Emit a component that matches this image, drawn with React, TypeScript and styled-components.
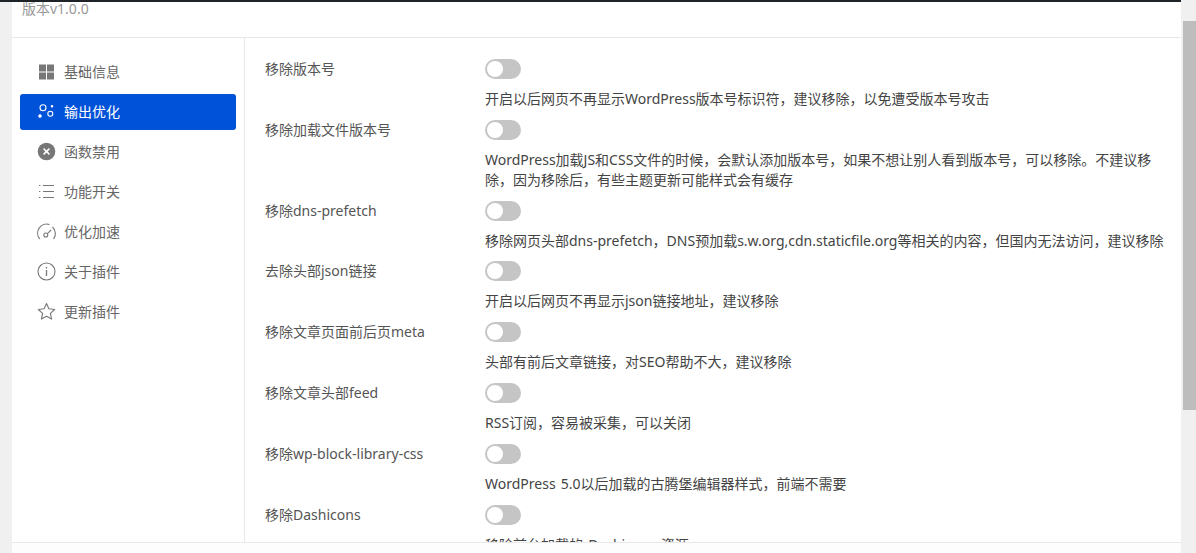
import styled, { createGlobalStyle } from "styled-components";

const GlobalStyle = createGlobalStyle`
  html, body {
    margin: 0;
    padding: 0;
    height: 100%;
    overflow: hidden;
    background: #f0f0f0;
  }
  * {
    box-sizing: border-box;
  }
  #root {
    height: 100%;
  }
`;

const Page = styled.div`
  display: flex;
  width: 1196px;
  height: 553px;
  overflow: hidden;
  font-family: "Noto Sans", "Noto Sans CJK SC", sans-serif;
  font-size: 14px;
`;

const Column = styled.div`
  display: flex;
  flex-direction: column;
  width: 1181px;
  height: 100%;
`;

const AdminBar = styled.div`
  flex: none;
  height: 2px;
  background: #1d2327;
`;

const Panel = styled.div`
  display: flex;
  flex: 1;
  flex-direction: column;
  min-height: 0;
  margin-left: 12px;
  background: #fff;
`;

const PanelHeader = styled.div`
  flex: none;
  height: 36px;
  padding-left: 10px;
  border-bottom: 1px solid #e8e8e8;
  color: #999;
  line-height: 13px;
`;

const PanelBody = styled.div`
  display: flex;
  flex: 1;
  min-height: 0;
`;

const Sidebar = styled.nav`
  display: flex;
  flex: none;
  flex-direction: column;
  gap: 4px;
  width: 233px;
  padding: 16px 8px 0;
  border-right: 1px solid #e8e8e8;
`;

const MenuItem = styled.a<{ $active?: boolean }>`
  display: flex;
  align-items: center;
  gap: 8px;
  height: 36px;
  padding-left: 17px;
  padding-bottom: 2px;
  border-radius: 3px;
  background: ${(p) => (p.$active ? "#0052d9" : "transparent")};
  color: ${(p) => (p.$active ? "#fff" : "#666")};
  svg {
    flex: none;
    width: 19px;
    height: 19px;
  }
`;

const Settings = styled.div`
  flex: 1;
  min-width: 0;
  padding: 21px 12px 0 20px;
  overflow: hidden;
`;

const Row = styled.div`
  display: grid;
  grid-template-columns: 220px 1fr;
  grid-template-rows: 20px auto;
  row-gap: 10px;
  padding-bottom: 10.8px;
`;

const Label = styled.div`
  color: #555;
  line-height: 19.4px;
`;

const Toggle = styled.span`
  display: block;
  width: 36px;
  height: 20px;
  padding: 2px;
  border-radius: 10px;
  background: #c5c5c5;
  &::before {
    content: "";
    display: block;
    width: 16px;
    height: 16px;
    border-radius: 50%;
    background: #fff;
  }
`;

const Description = styled.div`
  grid-column: 2;
  color: #444;
  line-height: 20px;
  word-spacing: 1.5px;
`;

const PanelFooter = styled.div`
  flex: none;
  height: 11px;
  border-top: 1px solid #e8e8e8;
  background: #fdfdfd;
`;

const ScrollTrack = styled.div`
  flex: none;
  width: 15px;
  height: 100%;
  padding: 21px 0 0 2px;
  background: #f0f0f0;
`;

const ScrollThumb = styled.div`
  height: 389px;
  background: #bdbdbd;
`;

const GridIcon = () => (
  <svg viewBox="0 0 19 19" fill="#777">
    <rect x="2" y="2.5" width="7" height="7" />
    <rect x="10" y="2.5" width="7" height="7" />
    <rect x="2" y="10.5" width="7" height="7" />
    <rect x="10" y="10.5" width="7" height="7" />
  </svg>
);

const NodesIcon = () => (
  <svg viewBox="0 0 19 19" fill="none" stroke="#fff" strokeWidth="1.1">
    <circle cx="6" cy="5.8" r="3" />
    <circle cx="13.3" cy="11.8" r="2.5" />
    <circle cx="3" cy="14" r="1.2" fill="#fff" />
    <circle cx="15" cy="4.2" r="0.7" fill="#fff" />
  </svg>
);

const CloseIcon = () => (
  <svg viewBox="0 0 19 19">
    <circle cx="9.5" cy="9.5" r="8.8" fill="#777" />
    <path d="M6.6 6.6l5.8 5.8M12.4 6.6l-5.8 5.8" stroke="#fff" strokeWidth="1.5" />
  </svg>
);

const ListIcon = () => (
  <svg viewBox="0 0 19 19" fill="none" stroke="#777" strokeWidth="1">
    <path d="M6 3.5h11M6 9.5h11M6 15.5h11M2 3.5h1.4M2 9.5h1.4M2 15.5h1.4" />
  </svg>
);

const GaugeIcon = () => (
  <svg viewBox="0 0 19 19" fill="none" stroke="#777" strokeWidth="1.1">
    <path d="M2.8 17A9 9 0 0 1 12.5 2.6M15.5 5A9 9 0 0 1 16.5 17" />
    <circle cx="8.8" cy="13" r="2" />
    <path d="M10.3 11.6l3.9-3.6" />
  </svg>
);

const InfoIcon = () => (
  <svg viewBox="0 0 19 19" fill="none" stroke="#777" strokeWidth="1.1">
    <circle cx="9.5" cy="9.5" r="8.5" />
    <path d="M9.5 8v6" strokeWidth="1.3" />
    <path d="M9.5 5v1.5" strokeWidth="1.3" />
  </svg>
);

const StarIcon = () => (
  <svg viewBox="0 0 19 19" fill="none" stroke="#777" strokeWidth="1.1" strokeLinejoin="round">
    <path d="M9.5 1.5l2.4 5.3 5.8.7-4.3 3.9 1.2 5.7-5.1-2.9-5.1 2.9 1.2-5.7-4.3-3.9 5.8-.7z" />
  </svg>
);

const menu = [
  { label: "基础信息", icon: <GridIcon /> },
  { label: "输出优化", icon: <NodesIcon />, active: true },
  { label: "函数禁用", icon: <CloseIcon /> },
  { label: "功能开关", icon: <ListIcon /> },
  { label: "优化加速", icon: <GaugeIcon /> },
  { label: "关于插件", icon: <InfoIcon /> },
  { label: "更新插件", icon: <StarIcon /> },
];

const settings = [
  { label: "移除版本号", desc: "开启以后网页不再显示WordPress版本号标识符，建议移除，以免遭受版本号攻击" },
  {
    label: "移除加载文件版本号",
    desc: "WordPress加载JS和CSS文件的时候，会默认添加版本号，如果不想让别人看到版本号，可以移除。不建议移除，因为移除后，有些主题更新可能样式会有缓存",
  },
  {
    label: "移除dns-prefetch",
    desc: "移除网页头部dns-prefetch，DNS预加载s.w.org,cdn.staticfile.org等相关的内容，但国内无法访问，建议移除",
  },
  { label: "去除头部json链接", desc: "开启以后网页不再显示json链接地址，建议移除" },
  { label: "移除文章页面前后页meta", desc: "头部有前后文章链接，对SEO帮助不大，建议移除" },
  { label: "移除文章头部feed", desc: "RSS订阅，容易被采集，可以关闭" },
  { label: "移除wp-block-library-css", desc: "WordPress 5.0以后加载的古腾堡编辑器样式，前端不需要" },
  { label: "移除Dashicons", desc: "移除前台加载的 Dashicons 资源" },
];

function App() {
  return (
    <Page>
      <GlobalStyle />
      <Column>
        <AdminBar />
        <Panel>
          <PanelHeader>版本v1.0.0</PanelHeader>
          <PanelBody>
            <Sidebar>
              {menu.map((item) => (
                <MenuItem key={item.label} $active={item.active}>
                  {item.icon}
                  {item.label}
                </MenuItem>
              ))}
            </Sidebar>
            <Settings>
              {settings.map((row) => (
                <Row key={row.label}>
                  <Label>{row.label}</Label>
                  <Toggle />
                  <Description>{row.desc}</Description>
                </Row>
              ))}
            </Settings>
          </PanelBody>
          <PanelFooter />
        </Panel>
      </Column>
      <ScrollTrack>
        <ScrollThumb />
      </ScrollTrack>
    </Page>
  );
}

export default App;
